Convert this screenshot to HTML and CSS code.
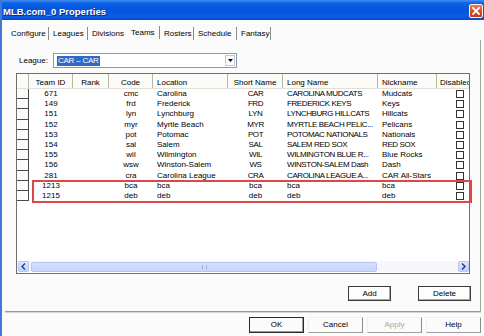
FILE: index.html
```html
<html>
<head>
  <title>MLB.com_0 Properties</title>
  <meta charset="UTF-8">
  <link rel="stylesheet" href="styles.css">
</head>
<body>
  <div class="window">
    <div class="titlebar">
      <span class="title">MLB.com_0 Properties</span>
      <span class="close-btn">
        <svg width="8" height="8" viewBox="0 0 8 8"><path d="M1 1 L7 7 M7 1 L1 7" stroke="#fff" stroke-width="1.8" stroke-linecap="square"/></svg>
      </span>
    </div>

    <div class="client">
      <div class="tabs">
        <span class="tab">Configure</span>
        <span class="tab">Leagues</span>
        <span class="tab tab-before-active">Divisions</span>
        <span class="tab tab-active">Teams</span>
        <span class="tab">Rosters</span>
        <span class="tab">Schedule</span>
        <span class="tab">Fantasy</span>
      </div>

      <div class="panel">
        <div class="league-row">
          <span class="league-label">League:</span>
          <div class="combo">
            <span class="combo-text">CAR -- CAR</span>
            <span class="combo-drop">
              <svg width="5" height="3" viewBox="0 0 5 3"><path d="M0 0 H5 L2.5 3 Z" fill="#000"/></svg>
            </span>
          </div>
        </div>

        <div class="list">
          <div class="list-head">
            <span class="hc"></span>
            <span class="hc center">Team ID</span>
            <span class="hc center">Rank</span>
            <span class="hc center">Code</span>
            <span class="hc">Location</span>
            <span class="hc center">Short Name</span>
            <span class="hc">Long Name</span>
            <span class="hc">Nickname</span>
            <span class="hc">Disabled</span>
          </div>

          <div class="list-body">
            <div class="row"><span class="rh"></span><span class="c center">671</span><span class="c"></span><span class="c center">cmc</span><span class="c">Carolina</span><span class="c center caps">CAR</span><span class="c caps">CAROLINA MUDCATS</span><span class="c">Mudcats</span><span class="c center"><i class="chk"></i></span></div>
            <div class="row"><span class="rh"></span><span class="c center">149</span><span class="c"></span><span class="c center">frd</span><span class="c">Frederick</span><span class="c center caps">FRD</span><span class="c caps">FREDERICK KEYS</span><span class="c">Keys</span><span class="c center"><i class="chk"></i></span></div>
            <div class="row"><span class="rh"></span><span class="c center">151</span><span class="c"></span><span class="c center">lyn</span><span class="c">Lynchburg</span><span class="c center caps">LYN</span><span class="c caps">LYNCHBURG HILLCATS</span><span class="c">Hillcats</span><span class="c center"><i class="chk"></i></span></div>
            <div class="row"><span class="rh"></span><span class="c center">152</span><span class="c"></span><span class="c center">myr</span><span class="c">Myrtle Beach</span><span class="c center caps">MYR</span><span class="c caps">MYRTLE BEACH PELIC...</span><span class="c">Pelicans</span><span class="c center"><i class="chk"></i></span></div>
            <div class="row"><span class="rh"></span><span class="c center">153</span><span class="c"></span><span class="c center">pot</span><span class="c">Potomac</span><span class="c center caps">POT</span><span class="c caps">POTOMAC NATIONALS</span><span class="c">Nationals</span><span class="c center"><i class="chk"></i></span></div>
            <div class="row"><span class="rh"></span><span class="c center">154</span><span class="c"></span><span class="c center">sal</span><span class="c">Salem</span><span class="c center caps">SAL</span><span class="c caps">SALEM RED SOX</span><span class="c caps">RED SOX</span><span class="c center"><i class="chk"></i></span></div>
            <div class="row"><span class="rh"></span><span class="c center">155</span><span class="c"></span><span class="c center">wil</span><span class="c">Wilmington</span><span class="c center caps">WIL</span><span class="c caps">WILMINGTON BLUE R...</span><span class="c">Blue Rocks</span><span class="c center"><i class="chk"></i></span></div>
            <div class="row"><span class="rh"></span><span class="c center">156</span><span class="c"></span><span class="c center">wsw</span><span class="c">Winston-Salem</span><span class="c center caps">WS</span><span class="c caps">WINSTON-SALEM Dash</span><span class="c">Dash</span><span class="c center"><i class="chk"></i></span></div>
            <div class="row"><span class="rh"></span><span class="c center">281</span><span class="c"></span><span class="c center">cra</span><span class="c">Carolina League</span><span class="c center caps">CRA</span><span class="c caps">CAROLINA LEAGUE A...</span><span class="c">CAR All-Stars</span><span class="c center"><i class="chk"></i></span></div>
            <div class="row"><span class="rh"></span><span class="c center">1213</span><span class="c"></span><span class="c center">bca</span><span class="c">bca</span><span class="c center">bca</span><span class="c">bca</span><span class="c">bca</span><span class="c center"><i class="chk"></i></span></div>
            <div class="row"><span class="rh"></span><span class="c center">1215</span><span class="c"></span><span class="c center">deb</span><span class="c">deb</span><span class="c center">deb</span><span class="c">deb</span><span class="c">deb</span><span class="c center"><i class="chk"></i></span></div>
          </div>

          <div class="hscroll">
            <span class="sb-btn">
              <svg width="5" height="7" viewBox="0 0 5 7"><path d="M4 0.5 L1 3.5 L4 6.5" fill="none" stroke="#1d3c8f" stroke-width="1.4"/></svg>
            </span>
            <span class="sb-thumb"><span class="grip"></span></span>
            <span class="sb-track"></span>
            <span class="sb-btn">
              <svg width="5" height="7" viewBox="0 0 5 7"><path d="M1 0.5 L4 3.5 L1 6.5" fill="none" stroke="#1d3c8f" stroke-width="1.4"/></svg>
            </span>
          </div>

          <div class="mark"></div>
        </div>

        <div class="panel-actions">
          <span class="btn btn-add">Add</span>
          <span class="btn btn-delete">Delete</span>
        </div>
      </div>

      <div class="dialog-actions">
        <span class="dbtn dbtn-default">OK</span>
        <span class="dbtn">Cancel</span>
        <span class="dbtn dbtn-disabled">Apply</span>
        <span class="dbtn">Help</span>
      </div>
    </div>
  </div>
</body>
</html>
```

FILE: styles.css
```css
* {
  box-sizing: border-box;
}

body {
  margin: 0;
  background: #fbfbfb;
  font-family: 'Liberation Sans', Arial, sans-serif;
  font-size: 8px;
  color: #000;
  overflow: hidden;
}

.window {
  width: 484px;
  height: 336px;
  border-left: 2px solid #4677d6;
  background: #fbfbfb;
}

/* title bar */
.titlebar {
  height: 20px;
  display: flex;
  align-items: center;
  padding: 1px 1px 0 1px;
  background: linear-gradient(#4591f4 0, #0e62e6 3px, #0356dc 50%, #0a5ce2 85%, #0a48c8 100%);
}

.title {
  flex: 1;
  color: #fff;
  font-weight: bold;
  font-size: 9.5px;
  padding-top: 1px;
  text-shadow: 1px 1px 0 #0a2a80;
}

.close-btn {
  width: 14px;
  height: 14px;
  display: flex;
  align-items: center;
  justify-content: center;
  border: 1px solid #f4f4f4;
  border-radius: 2px;
  background: linear-gradient(#ec8060, #dd4a22 50%, #c83c16);
}

/* tabs */
.client {
  padding-top: 7px;
}

.tabs {
  display: grid;
  grid-template-columns: 42px 39px 38px 34px 34px 43px 34px;
  margin-left: 5px;
  height: 13px;
}

.tab {
  height: 13px;
  line-height: 13px;
  padding-left: 4px;
  border-right: 1px solid #8a8a8a;
  white-space: nowrap;
}

.tab-before-active {
  border-right: none;
}

.tab-active {
  padding-left: 5px;
  margin-top: -1px;
}

/* tab page */
.panel {
  margin-left: 3px;
  width: 476px;
  height: 272px;
  border-right: 1px solid #a4a498;
  border-bottom: 1px solid #9a9a8e;
  box-shadow: 0 1px 0 #d6d6cc;
}

.league-row {
  display: flex;
  align-items: center;
  padding: 13px 0 0 14px;
}

.league-label {
  width: 34px;
}

.combo {
  width: 184px;
  height: 15px;
  display: flex;
  align-items: center;
  padding: 0 1px 0 3px;
  border: 1px solid #7f9db9;
  background: #fff;
}

.combo-text {
  background: #316ac5;
  color: #fff;
  height: 10px;
  line-height: 10px;
  padding: 0 1px;
  letter-spacing: -0.3px;
}

.combo-drop {
  margin-left: auto;
  width: 10px;
  height: 11px;
  display: flex;
  align-items: center;
  justify-content: center;
  border: 1px solid #c8c8c8;
  background: #fdfdfd;
}

/* list view */
.list {
  position: relative;
  margin: 5px 0 0 11px;
  width: 454px;
  height: 201px;
  border: 1px solid #6f6f6f;
  background: #fff;
}

.list-head,
.row {
  display: grid;
  grid-template-columns: 12px 44px 36px 44px 75px 55px 95px 59px 46px;
  width: 452px;
  overflow: hidden;
}

.list-head {
  height: 15px;
  background: #fbfbf8;
  border-bottom: 1px solid #e2e0d6;
}

.hc {
  line-height: 13px;
  padding: 2px 0 0 4px;
  border-right: 1px solid #b8b6a8;
  white-space: nowrap;
  overflow: hidden;
}

.hc:last-child {
  padding-left: 3px;
}

.list-body {
  height: 172px;
}

.row {
  height: 10.2px;
}

.c {
  line-height: 10.2px;
  padding-left: 4px;
  white-space: nowrap;
  overflow: hidden;
}

.center {
  text-align: center;
  padding-left: 0;
}

.caps {
  letter-spacing: -0.4px;
}

.rh {
  border-right: 1px solid #4a4a4a;
  border-bottom: 1px solid #4a4a4a;
  background: #fbfbfb;
}

.chk {
  display: inline-block;
  width: 8px;
  height: 8px;
  margin-top: 1px;
  border: 1px solid #333;
  background: #fff;
  vertical-align: top;
}

.hscroll {
  height: 11px;
  display: flex;
  align-items: center;
  padding: 0 0 0 1px;
  background: #f7f7fb;
}

.sb-btn {
  width: 11px;
  height: 11px;
  display: flex;
  align-items: center;
  justify-content: center;
  border: 1px solid #b6c6ee;
  border-radius: 2px;
  background: linear-gradient(#dde6fd, #c4d3fb);
}

.sb-thumb {
  width: 346px;
  height: 10px;
  margin-left: 2px;
  display: flex;
  align-items: center;
  justify-content: center;
  border: 1px solid #b3c5f1;
  border-radius: 2px;
  background: linear-gradient(#d6e0fd, #c6d4fb);
}

.grip {
  width: 5px;
  height: 4px;
  border-left: 1px solid #9fb2e6;
  border-right: 1px solid #9fb2e6;
}

.sb-track {
  flex: 1;
}

.mark {
  position: absolute;
  left: 15px;
  top: 106px;
  width: 440px;
  height: 23px;
  border: 2.5px solid #dc4848;
}

/* buttons */
.panel-actions {
  display: flex;
  justify-content: flex-end;
  gap: 27px;
  margin-top: 12px;
  padding-right: 9px;
}

.btn {
  height: 15px;
  line-height: 13px;
  text-align: center;
  border: 1px solid #3c3c3c;
  box-shadow: inset -1px -1px 0 #a8a8a8;
  background: #fdfdfd;
}

.btn-add {
  width: 43px;
}

.btn-delete {
  width: 53px;
}

.dialog-actions {
  display: flex;
  justify-content: flex-end;
  gap: 4px;
  margin-top: 5px;
  padding-right: 3px;
}

.dbtn {
  width: 55px;
  height: 16px;
  line-height: 14px;
  text-align: center;
  border: 1px solid #f0f0f0;
  border-right-color: #8c8c8c;
  border-bottom-color: #a0a0a0;
}

.dbtn-default {
  border: 1px solid #2a2a2a;
  box-shadow: inset -1px -1px 0 #9a9a9a;
}

.dbtn-disabled {
  color: #a8a8a8;
}
```
